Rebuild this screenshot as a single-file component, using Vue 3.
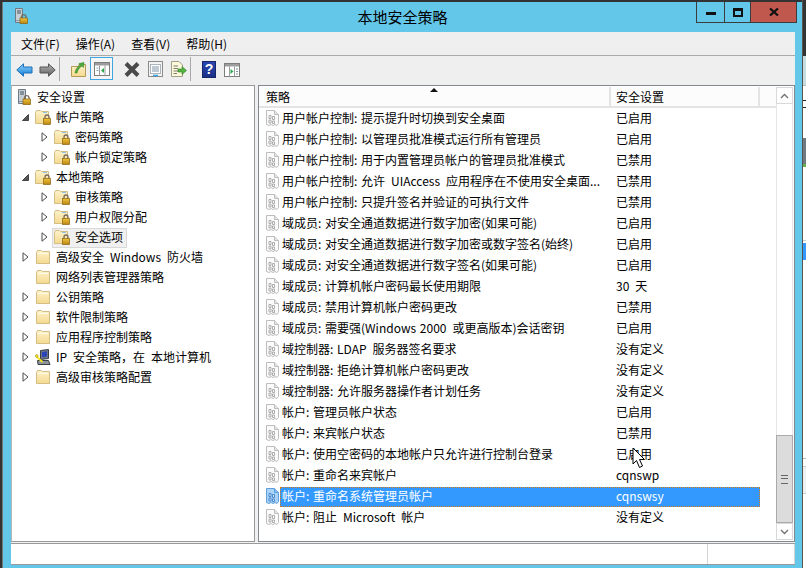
<script setup>
const menus = ["文件(F)", "操作(A)", "查看(V)", "帮助(H)"]

const tree = [
  { label: "帐户策略", level: 1, arrow: "open", icon: "lockfolder" },
  { label: "密码策略", level: 2, arrow: "closed", icon: "lockfolder" },
  { label: "帐户锁定策略", level: 2, arrow: "closed", icon: "lockfolder" },
  { label: "本地策略", level: 1, arrow: "open", icon: "lockfolder" },
  { label: "审核策略", level: 2, arrow: "closed", icon: "lockfolder" },
  { label: "用户权限分配", level: 2, arrow: "closed", icon: "lockfolder" },
  { label: "安全选项", level: 2, arrow: "closed", icon: "lockfolder", active: true },
  { label: "高级安全\u2002Windows\u2002防火墙", level: 1, arrow: "closed", icon: "folder" },
  { label: "网络列表管理器策略", level: 1, arrow: "", icon: "folder" },
  { label: "公钥策略", level: 1, arrow: "closed", icon: "folder" },
  { label: "软件限制策略", level: 1, arrow: "closed", icon: "folder" },
  { label: "应用程序控制策略", level: 1, arrow: "closed", icon: "folder" },
  { label: "IP\u2002安全策略，在\u2002本地计算机", level: 1, arrow: "closed", icon: "ipsec" },
  { label: "高级审核策略配置", level: 1, arrow: "closed", icon: "folder" },
]

const rows = [
  ["用户帐户控制: 提示提升时切换到安全桌面", "已启用"],
  ["用户帐户控制: 以管理员批准模式运行所有管理员", "已启用"],
  ["用户帐户控制: 用于内置管理员帐户的管理员批准模式", "已禁用"],
  ["用户帐户控制: 允许\u2002UIAccess\u2002应用程序在不使用安全桌面...", "已禁用"],
  ["用户帐户控制: 只提升签名并验证的可执行文件", "已禁用"],
  ["域成员: 对安全通道数据进行数字加密(如果可能)", "已启用"],
  ["域成员: 对安全通道数据进行数字加密或数字签名(始终)", "已启用"],
  ["域成员: 对安全通道数据进行数字签名(如果可能)", "已启用"],
  ["域成员: 计算机帐户密码最长使用期限", "30\u2002天"],
  ["域成员: 禁用计算机帐户密码更改", "已禁用"],
  ["域成员: 需要强(Windows 2000\u2002或更高版本)会话密钥", "已启用"],
  ["域控制器: LDAP\u2002服务器签名要求", "没有定义"],
  ["域控制器: 拒绝计算机帐户密码更改", "没有定义"],
  ["域控制器: 允许服务器操作者计划任务", "没有定义"],
  ["帐户: 管理员帐户状态", "已启用"],
  ["帐户: 来宾帐户状态", "已禁用"],
  ["帐户: 使用空密码的本地帐户只允许进行控制台登录", "已启用"],
  ["帐户: 重命名来宾帐户", "cqnswp"],
  ["帐户: 重命名系统管理员帐户", "cqnswsy", true],
  ["帐户: 阻止\u2002Microsoft\u2002帐户", "没有定义"],
]
</script>

<template>
  <div class="screen">
    <svg class="defs" width="0" height="0">
      <defs>
        <linearGradient id="fold" x1="0" y1="0" x2="0" y2="1">
          <stop offset="0" stop-color="#fdf3cb" />
          <stop offset="1" stop-color="#f5d98f" />
        </linearGradient>
        <linearGradient id="lock" x1="0" y1="0" x2="0" y2="1">
          <stop offset="0" stop-color="#f0c53c" />
          <stop offset="1" stop-color="#b98313" />
        </linearGradient>
        <linearGradient id="blue" x1="0" y1="0" x2="0" y2="1">
          <stop offset="0" stop-color="#8fd6fb" />
          <stop offset="1" stop-color="#1379d6" />
        </linearGradient>
        <linearGradient id="gray" x1="0" y1="0" x2="0" y2="1">
          <stop offset="0" stop-color="#b5b5b5" />
          <stop offset="1" stop-color="#5f5f5f" />
        </linearGradient>
        <symbol id="folder" viewBox="0 0 16 16">
          <path d="M1.5 3.5V14.500H14.500V2.500H7.500L6.500 1.500H2.500Z" fill="url(#fold)" stroke="#d3bd84" />
          <path d="M3 4.500H13" stroke="#fffbe8" />
        </symbol>
        <symbol id="lockfolder" viewBox="0 0 16 16">
          <path d="M.5 3.500V14.500H13.500V2.500H6.500L5.500 1.500H1.500Z" fill="url(#fold)" stroke="#d3bd84" />
          <path d="M8 3.500H12" stroke="#8fc4e8" />
          <path d="M10 9.500V8A2 2 0 0 1 14 8V9.500" fill="none" stroke="#77695a" stroke-width="1.300" />
          <rect x="8.500" y="9.500" width="7" height="6" fill="url(#lock)" stroke="#8a6410" stroke-width=".7" />
        </symbol>
        <symbol id="server" viewBox="0 0 13 16">
          <path d="M.5 .5H7.500V14.500H.5Z" fill="#c7ced4" stroke="#6d7a85" />
          <path d="M2 3H6M2 5H6" stroke="#47525c" />
          <path d="M1 12.500H6" stroke="#8d98a1" />
          <path d="M6.500 10V8.500A2.300 2.300 0 0 1 11 8.500V10" fill="none" stroke="#77695a" stroke-width="1.300" />
          <rect x="5" y="10" width="7.600" height="5.600" fill="url(#lock)" stroke="#8a6410" stroke-width=".7" />
        </symbol>
        <symbol id="ipsec" viewBox="0 0 16 16">
          <path d="M5.500 1.500L13.500 .5V9.500L5.500 10.500Z" fill="#707a85" stroke="#3a3f45" />
          <path d="M7 3L12 2.300V7.600L7 8.300Z" fill="#2b45b8" />
          <path d="M2.500 11.500H13.500L15 15.500H3Z" fill="#8d949b" stroke="#3a3f45" />
          <path d="M.8 6.800L7.500 13" stroke="#f5e520" stroke-width="1.800" />
          <circle cx="1.800" cy="7" r="1.400" fill="#f5e520" stroke="#80760c" stroke-width=".4" />
        </symbol>
        <symbol id="doc" viewBox="0 0 14 16">
          <path d="M.5 .5H8.500L12.500 4.500V13.500L11 15.500L9 14.500L7 15.500L5 14.500L3 15.500L.5 14.500Z" fill="#fbfbfb" stroke="#bdbdbd" />
          <path d="M8.500 .5V4.500H12.500" fill="#e6e6e6" stroke="#bdbdbd" />
          <path d="M3 5.500h2v3H3ZM6.500 6.500h2v3h-2ZM3 10h2v3H3ZM6.500 11h2v2.500h-2Z" fill="#fff" stroke="#a3a3a3" stroke-width=".9" />
        </symbol>
        <symbol id="docsel" viewBox="0 0 14 16">
          <path d="M.5 .5H8.500L12.500 4.500V13.500L11 15.500L9 14.500L7 15.500L5 14.500L3 15.500L.5 14.500Z" fill="#a9d3fb" stroke="#5f9fdc" />
          <path d="M8.500 .5V4.500H12.500" fill="#85bdf4" stroke="#5f9fdc" />
          <path d="M3 5.500h2v3H3ZM6.500 6.500h2v3h-2ZM3 10h2v3H3ZM6.500 11h2v2.500h-2Z" fill="#cfe6fc" stroke="#3f7fc4" stroke-width=".9" />
        </symbol>
      </defs>
    </svg>

    <div class="window">
      <div class="titlebar">
        <svg class="title-icon" width="13" height="16"><use href="#server" /></svg>
        <span class="title">本地安全策略</span>
        <div class="caption">
          <div class="cap cap-min"><i></i></div>
          <div class="cap cap-max"><i></i></div>
          <div class="cap cap-close">
            <svg width="10" height="8" viewBox="0 0 10 8"><path d="M1 .5L9 7.500M9 .5L1 7.500" stroke="#111" stroke-width="2.200" /></svg>
          </div>
        </div>
      </div>

      <div class="client">
        <div class="menubar">
          <span v-for="m in menus" :key="m" class="menu">{{ m }}</span>
        </div>

        <div class="toolbar">
          <svg class="tb tb-back" width="17" height="14" viewBox="0 0 17 14">
            <path d="M.8 7L7.500 .8V4H16V10H7.500V13.200Z" fill="url(#blue)" stroke="#1c6fb8" />
          </svg>
          <svg class="tb tb-fwd" width="17" height="14" viewBox="0 0 17 14">
            <path d="M16.200 7L9.500 .8V4H1V10H9.500V13.200Z" fill="url(#gray)" stroke="#555" />
          </svg>
          <span class="sep sep-1"></span>
          <svg class="tb tb-up" width="15" height="16" viewBox="0 0 15 16">
            <path d="M.5 5.500V15.500H14.500V3.500H8L7 5.500Z" fill="url(#fold)" stroke="#b79a55" />
            <path d="M4 12C4.500 8 6.500 5.500 9 4.500L8 2.500L13 1.500L12.500 6.500L11 5C8.500 6.500 6.500 9 6 12Z" fill="#4fa83a" stroke="#2f7a22" stroke-width=".5" />
          </svg>
          <div class="tb-active">
            <svg width="16" height="14" viewBox="0 0 16 14">
              <rect x=".5" y=".5" width="15" height="13" fill="#fff" stroke="#7d7d7d" />
              <rect x="1" y="1" width="14" height="2.500" fill="#9d9d9d" />
              <path d="M5.500 3.500V13.500M11 3.500V13.500" stroke="#9d9d9d" />
              <path d="M2.500 6H4.500M2.500 8.500H4.500" stroke="#8aa0b5" />
              <path d="M10 6V11L7 8.500Z" fill="#2aa84a" />
            </svg>
          </div>
          <svg class="tb tb-x" width="16" height="15" viewBox="0 0 16 15">
            <path d="M2 1.500L14 13.500M14 1.500L2 13.500" stroke="#4a4a4a" stroke-width="4" />
          </svg>
          <svg class="tb tb-props" width="15" height="16" viewBox="0 0 15 16">
            <rect x=".5" y=".5" width="14" height="15" fill="#f4f4f4" stroke="#8b8b8b" />
            <rect x="2.500" y="3.500" width="10" height="9" fill="#fff" stroke="#a9b4be" />
            <path d="M4 6H11M4 8H11M4 10H11" stroke="#7f93a8" />
            <path d="M5 14.500H10" stroke="#3aa0e0" stroke-width="1.500" />
          </svg>
          <svg class="tb tb-export" width="17" height="16" viewBox="0 0 17 16">
            <path d="M1.500 .5H9L12.500 4V15.500H1.500Z" fill="#fdf8da" stroke="#a29f8c" />
            <path d="M3.500 5H8M3.500 7.500H8M3.500 10H8M3.500 12.500H7" stroke="#7d7d72" />
            <path d="M8 8H12V5.500L16.500 9.500L12 13.500V11H8Z" fill="#52b341" stroke="#35822a" stroke-width=".6" />
          </svg>
          <span class="sep sep-2"></span>
          <div class="tb tb-help">?</div>
          <svg class="tb tb-action" width="16" height="14" viewBox="0 0 16 14">
            <rect x=".5" y=".5" width="15" height="13" fill="#fff" stroke="#7d7d7d" />
            <rect x="1" y="1" width="14" height="2.500" fill="#9d9d9d" />
            <path d="M5.500 3.500V13.500M10.500 3.500V13.500" stroke="#9d9d9d" />
            <path d="M6.500 6V11L9.500 8.500Z" fill="#2aa84a" />
            <path d="M12 6H14M12 8.500H14M12 11H14" stroke="#7f93a8" />
          </svg>
        </div>

        <div class="panes">
          <div class="tree">
            <div class="node root">
              <svg class="node-icon" width="13" height="16"><use href="#server" /></svg>
              <span class="node-text">安全设置</span>
            </div>
            <div
              v-for="n in tree"
              :key="n.label"
              :class="['node', n.level === 2 ? 'lv2' : 'lv1', n.active ? 'active' : '']"
            >
              <span class="arrow">
                <svg v-if="n.arrow === 'closed'" width="7" height="10" viewBox="0 0 7 10">
                  <path d="M1 .8L6 5L1 9.200Z" fill="#fff" stroke="#4a4a4a" />
                </svg>
                <svg v-else-if="n.arrow === 'open'" width="7" height="7" viewBox="0 0 7 7">
                  <path d="M6.500 .5V6.500H.5Z" fill="#555" stroke="#444" />
                </svg>
              </span>
              <svg class="node-icon" width="16" height="16"><use :href="'#' + n.icon" /></svg>
              <span class="node-text">{{ n.label }}</span>
            </div>
          </div>

          <div class="right">
            <div class="list">
              <div class="head">
                <div class="th th-name">策略<i class="sort"></i></div>
                <div class="th th-val">安全设置</div>
              </div>
              <div v-for="r in rows" :key="r[0]" :class="['row', r[2] ? 'selected' : '']">
                <svg class="doc" width="14" height="16"><use :href="r[2] ? '#docsel' : '#doc'" /></svg>
                <div class="cells">
                  <span class="c-name">{{ r[0] }}</span>
                  <span class="c-val">{{ r[1] }}</span>
                </div>
              </div>
            </div>
            <div class="vscroll">
              <div class="vbtn">
                <svg width="9" height="6" viewBox="0 0 9 6"><path d="M1 5L4.500 1.500L8 5" fill="none" stroke="#707070" stroke-width="1.300" /></svg>
              </div>
              <div class="vtrack"></div>
              <div class="vthumb"><i></i></div>
              <div class="vbtn vbtn-down">
                <svg width="9" height="6" viewBox="0 0 9 6"><path d="M1 1L4.500 4.500L8 1" fill="none" stroke="#707070" stroke-width="1.300" /></svg>
              </div>
            </div>
          </div>
        </div>

        <div class="status">
          <div class="st st-main"></div>
          <div class="st st-end"></div>
        </div>
      </div>
    </div>

    <div class="behind">
      <div class="b-dark"></div>
      <div class="b-pale"></div>
      <div class="b-text"><i></i></div>
      <div class="b-thumb"></div>
      <div class="b-sel"></div>
      <div class="b-gap"></div>
      <div class="b-box"></div>
    </div>

    <svg class="cursor" width="14" height="22" viewBox="0 0 14 22">
      <path d="M1 1V17L4.500 13.500L7.500 20.500L10.500 19L7.500 12.500H12.500Z" fill="#fff" stroke="#000" stroke-width="1" />
    </svg>
  </div>
</template>

<style scoped>
.screen {
  position: relative;
  width: 806px;
  height: 568px;
  display: flex;
  overflow: hidden;
  font-family: "Noto Sans CJK SC", "Open Sans", sans-serif;
  font-size: 12px;
  color: #000;
  background: #333;
}
.defs {
  position: absolute;
}
.window {
  width: 799px;
  height: 566px;
  margin: 2px 0 0 2px;
  background: #63c7ea;
  display: flex;
  flex-direction: column;
  border-left: 1px solid #777;
  flex: none;
}
.titlebar {
  position: relative;
  height: 30px;
  display: flex;
  align-items: center;
  justify-content: center;
  flex: none;
}
.title-icon {
  position: absolute;
  left: 12px;
  top: 6px;
}
.title {
  font-size: 15px;
  line-height: 30px;
}
.caption {
  position: absolute;
  left: 693px;
  top: 0;
  display: flex;
  height: 21px;
  border: 1px solid #3c3c3c;
  border-top: none;
  box-sizing: border-box;
}
.cap {
  display: flex;
  align-items: center;
  justify-content: center;
  border-right: 1px solid #3c3c3c;
}
.cap-min {
  width: 27px;
}
.cap-min i {
  width: 10px;
  height: 3px;
  margin-top: 3px;
  background: #111;
}
.cap-max {
  width: 25px;
}
.cap-max i {
  width: 6px;
  height: 4px;
  border: 2px solid #111;
  border-top-width: 3px;
}
.cap-close {
  width: 45px;
  background: #c0584e;
  border-right: none;
}
.client {
  width: 784px;
  height: 533px;
  margin-left: 8px;
  background: #f0f0f0;
  display: flex;
  flex-direction: column;
  border-bottom: 1px solid #9a9a9a;
  box-sizing: border-box;
}
.menubar {
  height: 23px;
  display: flex;
  align-items: center;
  background: #efefef;
  border-bottom: 1px solid #a9a9a9;
  padding-left: 10px;
  gap: 16px;
  flex: none;
}
.menu {
  line-height: 22px;
}
.toolbar {
  position: relative;
  height: 29px;
  flex: none;
  background: #efefef;
}
.tb,
.sep,
.tb-active {
  position: absolute;
}
.tb-back { left: 5px; top: 7px; }
.tb-fwd { left: 28px; top: 7px; }
.sep {
  top: 1px;
  width: 1px;
  height: 24px;
  background: #a8a8a8;
}
.sep-1 { left: 48px; }
.sep-2 { left: 179px; }
.tb-up { left: 60px; top: 5px; }
.tb-active {
  left: 79px;
  top: 1px;
  width: 21px;
  height: 21px;
  border: 1px solid #3ea6e0;
  background: #f5f5f5;
  display: flex;
  align-items: center;
  justify-content: center;
}
.tb-x { left: 113px; top: 6px; }
.tb-props { left: 137px; top: 5px; }
.tb-export { left: 159px; top: 5px; }
.tb-help {
  left: 191px;
  top: 5px;
  width: 12px;
  height: 15px;
  background: linear-gradient(#2a47b0, #1c2f86);
  border: 1px solid #16246a;
  color: #fff;
  font: bold 14px/15px "Liberation Sans", sans-serif;
  text-align: center;
}
.tb-action { left: 213px; top: 7px; }
.panes {
  flex: 1;
  display: flex;
  min-height: 0;
  gap: 3px;
}
.tree {
  width: 244px;
  flex: none;
  background: #fff;
  border: 1px solid #9a9a9a;
  border-left: 1px solid #b5b5b5;
  box-sizing: border-box;
  padding-top: 1px;
}
.node {
  position: relative;
  height: 20px;
  display: flex;
  align-items: center;
  white-space: nowrap;
}
.node-text {
  line-height: 18px;
  margin-left: 5px;
}
.node-icon {
  flex: none;
  margin-left: 4px;
}
.root {
  padding-left: 6px;
}
.root .node-icon {
  margin-left: 0;
}
.root .node-text {
  margin-left: 6px;
}
.lv1 {
  padding-left: 7px;
}
.lv2 {
  padding-left: 26px;
}
.arrow {
  width: 12px;
  height: 12px;
  flex: none;
  display: flex;
  align-items: center;
  justify-content: center;
}
.active::before {
  content: "";
  position: absolute;
  left: 40px;
  top: 1px;
  width: 73px;
  height: 18px;
  background: #f0f0f0;
  border: 1px solid #d9d9d9;
}
.active > * {
  position: relative;
}
.right {
  flex: 1;
  display: flex;
  background: #fff;
  border: 1px solid #828790;
  min-width: 0;
  box-sizing: border-box;
}
.list {
  width: 517px;
  flex: none;
  overflow: hidden;
}
.head {
  height: 21px;
  display: flex;
  background: #fcfcfc;
  border-bottom: 2px solid #e4e4e4;
  box-sizing: border-box;
  margin-top: 1px;
}
.th {
  line-height: 19px;
  padding-left: 7px;
  position: relative;
  box-sizing: border-box;
  border-right: 2px solid #e4e4e4;
}
.th-name {
  width: 352px;
}
.th-val {
  width: 149px;
  padding-left: 5px;
}
.sort {
  position: absolute;
  left: 171px;
  top: 1px;
  width: 0;
  height: 0;
  border: 4px solid transparent;
  border-top: none;
  border-bottom: 4px solid #111;
}
.row {
  height: 21px;
  display: flex;
  align-items: flex-end;
  padding-left: 7px;
  word-spacing: 1px;
}
.doc {
  flex: none;
  margin-bottom: 3px;
}
.cells {
  width: 480px;
  height: 20px;
  display: flex;
  align-items: center;
  box-sizing: border-box;
  padding: 0 0 2px 2px;
  white-space: nowrap;
  flex: none;
}
.c-name {
  width: 334px;
  flex: none;
  line-height: 18px;
}
.c-val {
  line-height: 18px;
}
.selected .cells {
  background: #3399ff;
  color: #fff;
  outline: 1px dotted #d2781e;
  outline-offset: -1px;
}
.vscroll {
  margin: 1px 0;
  width: 17px;
  flex: none;
  display: flex;
  flex-direction: column;
  background: #fff;
  box-sizing: border-box;
}
.vbtn {
  height: 17px;
  flex: none;
  border: 1px solid #d9d9d9;
  display: flex;
  align-items: center;
  justify-content: center;
  box-sizing: border-box;
}
.vtrack {
  flex: 1;
  border-left: 1px solid #e6e6e6;
  border-right: 1px solid #e6e6e6;
}
.vthumb {
  height: 88px;
  flex: none;
  background: #dcdcdc;
  border: 1px solid #aaa;
  box-sizing: border-box;
  display: flex;
  align-items: center;
  justify-content: center;
}
.vthumb i {
  width: 7px;
  height: 7px;
  border-top: 1px solid #666;
  border-bottom: 1px solid #666;
  background: linear-gradient(#dcdcdc 2px, #666 2px, #666 3px, #dcdcdc 3px);
}
.status {
  height: 21px;
  flex: none;
  margin-top: 1px;
  display: flex;
  background: #fff;
  border-top: 1px solid #9a9a9a;
  box-sizing: border-box;
}
.st-main {
  width: 696px;
  border-right: 1px solid #d5d5d5;
}
.st-end {
  flex: 1;
  border-right: 1px solid #d5d5d5;
}
.behind {
  flex: 1;
  display: flex;
  flex-direction: column;
  background: #fff;
  border-left: 1px solid #555;
  overflow: hidden;
}
.b-dark {
  height: 56px;
  flex: none;
  background: #333;
}
.b-pale {
  height: 30px;
  flex: none;
  background: #c8dde2;
  border-bottom: 1px solid #bbb;
  box-sizing: border-box;
}
.b-text {
  height: 52px;
  flex: none;
  padding-top: 14px;
  box-sizing: border-box;
}
.b-text i {
  display: block;
  width: 4px;
  height: 8px;
  border-top: 1px solid #222;
  border-bottom: 1px solid #222;
  box-sizing: border-box;
}
.b-thumb {
  height: 29px;
  flex: none;
  background: linear-gradient(#707880 90%, #6ab04c 90%);
}
.b-sel {
  height: 17px;
  flex: none;
  margin-top: 76px;
  background: #3399ff;
  box-shadow: 0 -2px 0 #fff, 0 -3px 0 #ccc;
}
.b-gap {
  height: 199px;
  flex: none;
  border-bottom: 1px solid #bbb;
  box-sizing: border-box;
}
.b-box {
  height: 28px;
  flex: none;
  margin-top: 7px;
  background: #f0f0f0;
  border-top: 1px solid #ccc;
  border-bottom: 1px solid #ccc;
  box-sizing: border-box;
}
.cursor {
  position: absolute;
  left: 632px;
  top: 447px;
}
</style>

<style>
html, body {
  margin: 0;
  padding: 0;
}
</style>
